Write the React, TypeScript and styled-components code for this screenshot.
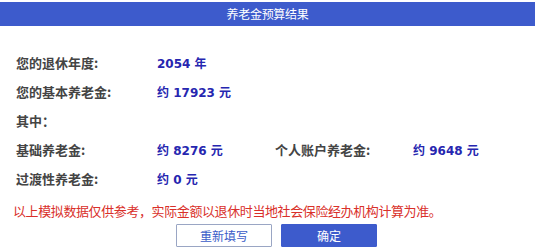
import React from 'react'
import styled, { createGlobalStyle } from 'styled-components'

const GlobalStyle = createGlobalStyle`
  html, body {
    margin: 0;
    padding: 0;
    background: #ffffff;
  }
  body {
    font-family: "Noto Sans CJK SC", "Liberation Sans", sans-serif;
  }
`

type Item = { label: string; value?: string }

const rows: Item[][] = [
  [{ label: '您的退休年度:', value: '2054 年' }],
  [{ label: '您的基本养老金:', value: '约 17923 元' }],
  [{ label: '其中：' }],
  [
    { label: '基础养老金:', value: '约 8276 元' },
    { label: '个人账户养老金:', value: '约 9648 元' },
  ],
  [{ label: '过渡性养老金:', value: '约 0 元' }],
]

const App: React.FC = () => {
  return (
    <Page>
      <GlobalStyle />
      <Header>养老金预算结果</Header>
      <Body>
        {rows.map((row, i) => (
          <Row key={i}>
            {row.map((item, j) => (
              <React.Fragment key={j}>
                <Label>{item.label}</Label>
                {item.value && <Value>{item.value}</Value>}
              </React.Fragment>
            ))}
          </Row>
        ))}
        <Notice>以上模拟数据仅供参考，实际金额以退休时当地社会保险经办机构计算为准。</Notice>
        <Actions>
          <Button>重新填写</Button>
          <Button primary>确定</Button>
        </Actions>
      </Body>
    </Page>
  )
}

export default App

const Page = styled.div`
  width: 535px;
  height: 251px;
  padding-top: 2px;
  box-sizing: border-box;
  background: #ffffff;
`

const Header = styled.div`
  height: 24px;
  background-color: #3d5bcc;
  color: #ffffff;
  font-size: 12px;
  line-height: 24px;
  text-align: center;
  letter-spacing: -0.3px;
`

const Body = styled.div`
  padding: 22px 0 0 16px;
`

const Row = styled.div`
  display: grid;
  grid-template-columns: 141px 118px 138px 1fr;
  align-items: baseline;
  height: 29px;
  line-height: 29px;
`

const Label = styled.div`
  font-size: 13px;
  font-weight: 700;
  color: #444444;
  white-space: nowrap;
`

const Value = styled.div`
  font-family: "DejaVu Sans", "Noto Sans CJK SC", sans-serif;
  font-size: 12px;
  font-weight: 700;
  color: #2626b0;
  white-space: nowrap;
`

const Notice = styled.div`
  margin: 10px 0 0 -3px;
  font-size: 13px;
  line-height: 16px;
  color: #d9302a;
  white-space: nowrap;
  letter-spacing: -0.4px;
`

const Actions = styled.div`
  display: flex;
  gap: 9px;
  margin: 5px 0 0 160px;
`

const Button = styled.button<{ primary?: boolean }>`
  width: 96px;
  height: 23px;
  box-sizing: border-box;
  padding: 0;
  font-family: "Noto Sans CJK SC", sans-serif;
  font-size: 12px;
  line-height: 21px;
  border: 1px solid ${p => (p.primary ? '#3d5bcc' : '#9aa6c4')};
  background: ${p => (p.primary ? '#3d5bcc' : '#ffffff')};
  color: ${p => (p.primary ? '#ffffff' : '#3a5bc8')};
  border-radius: 1px;
`
